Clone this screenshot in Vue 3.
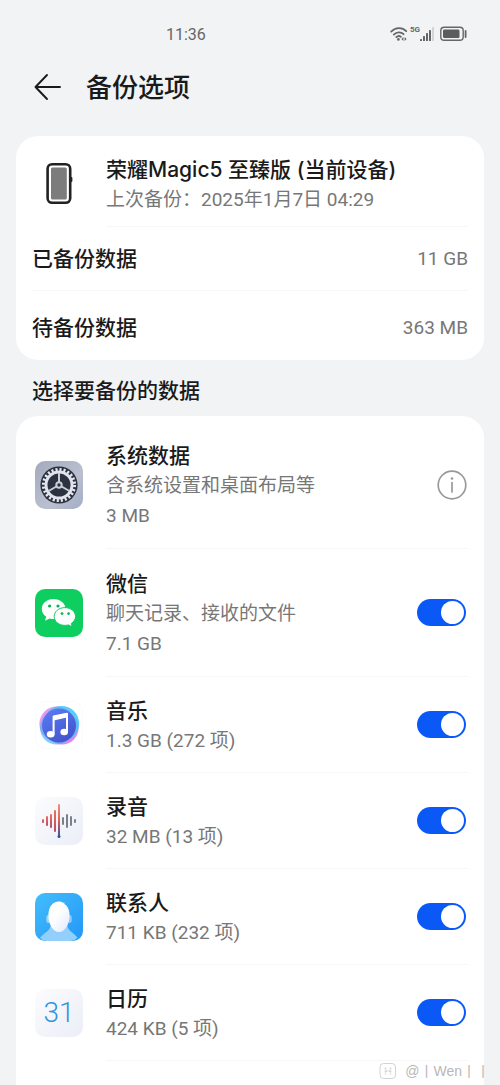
<template>
  <div class="page">
    <div class="status-bar">
      <span class="time">11:36</span>
      <div class="status-icons">
        <svg class="wifi" viewBox="0 0 18 16" aria-hidden="true">
          <g fill="none" stroke="#666" stroke-width="1.8" stroke-linecap="round">
            <path d="M1.2 5.6C5.6 1 12.4 1 16.2 5.2" />
            <path d="M3.8 8.6C6.8 5.6 11 5.6 13.6 8.2" />
            <path d="M6.3 11.2C7.6 9.9 9.6 9.8 10.8 10.8" />
          </g>
          <circle cx="8.4" cy="13.4" r="1.3" fill="#666" />
          <path d="M13.4 11l-2 2 2 2zM14.6 11l2 2-2 2z" fill="#666" />
        </svg>
        <span class="network">5G</span>
        <svg class="signal" viewBox="0 0 15 15" aria-hidden="true">
          <g fill="#666">
            <rect x="0" y="12" width="2" height="2" rx="0.6" />
            <rect x="3" y="9" width="2" height="5" rx="0.6" />
            <rect x="6" y="6" width="2" height="8" rx="0.6" />
            <rect x="9" y="3" width="2" height="11" rx="0.6" />
          </g>
          <rect x="12" y="0" width="2" height="14" rx="0.6" fill="#d3d4d5" />
        </svg>
        <svg class="battery" viewBox="0 0 28 16" aria-hidden="true">
          <rect x="0.8" y="1.3" width="22.4" height="13" rx="3.4" fill="none" stroke="#666" stroke-width="1.4" />
          <rect x="3" y="3.5" width="16.5" height="8.6" rx="1.4" fill="#5c5c5c" />
          <path d="M25.6 5v6" stroke="#666" stroke-width="1.8" stroke-linecap="round" />
        </svg>
      </div>
    </div>

    <header class="header">
      <button class="back-btn" type="button" aria-label="返回">
        <svg viewBox="0 0 28 28" fill="none" stroke="#1a1a1a" stroke-width="1.9" stroke-linecap="round" stroke-linejoin="round">
          <path d="M26 14H1.5M13 2L1.5 14L13 26" />
        </svg>
      </button>
      <h1>备份选项</h1>
    </header>

    <section class="card">
      <div class="row device-row">
        <svg class="icon" viewBox="0 0 48 48" aria-hidden="true">
          <rect x="35" y="17" width="2.4" height="5" rx="1" fill="#222" />
          <rect x="12.6" y="4.2" width="22.6" height="38.6" rx="4.5" fill="#fff" stroke="#222" stroke-width="2.6" />
          <rect x="16" y="7.6" width="15.8" height="31.8" rx="1.5" fill="#7c7c7c" />
        </svg>
        <div class="row-body">
          <div class="row-text">
            <h2>荣耀Magic5 至臻版 (当前设备)</h2>
            <p>上次备份：2025年1月7日 04:29</p>
          </div>
        </div>
      </div>
      <dl>
        <div v-for="item in summary" :key="item.label" class="summary-row">
          <dt>{{ item.label }}</dt>
          <dd>{{ item.value }}</dd>
        </div>
      </dl>
    </section>

    <h3 class="section-title">选择要备份的数据</h3>

    <section class="card list-card">
      <div v-for="app in apps" :key="app.id" class="row" :class="{ tall: app.desc }">
        <svg v-if="app.id === 'system'" class="icon" viewBox="0 0 48 48" aria-hidden="true">
          <defs>
            <linearGradient id="sys-bg" x1="0" y1="0" x2="1" y2="1">
              <stop offset="0" stop-color="#a3aabd" />
              <stop offset="0.6" stop-color="#bac0cf" />
              <stop offset="1" stop-color="#a4adc5" />
            </linearGradient>
          </defs>
          <rect width="48" height="48" rx="10" fill="url(#sys-bg)" />
          <circle cx="24" cy="24" r="18.6" fill="#2c3240" />
          <circle cx="24" cy="24" r="15.4" fill="none" stroke="#e4e7ee" stroke-width="3.4" stroke-dasharray="2.1 1.932" />
          <circle cx="24" cy="24" r="13" fill="none" stroke="#e0e3eb" stroke-width="3" />
          <path d="M24 24V12M24 24L34.4 30M24 24L13.6 30" stroke="#c9cdd8" stroke-width="2" />
          <circle cx="24" cy="24" r="2.7" fill="#2c3240" stroke="#c9cdd8" stroke-width="2" />
        </svg>
        <svg v-else-if="app.id === 'wechat'" class="icon" viewBox="0 0 48 48" aria-hidden="true">
          <rect width="48" height="48" rx="10" fill="#0fce60" />
          <path d="M18.500 10C11.800 10 6.800 14.400 6.800 20c0 3.200 1.800 5.900 4.400 7.800l-1.200 4 4.600-2.400c1.200.3 2.600.6 4 .6C25.300 30 30.500 25.600 30.500 20S25.200 10 18.500 10z" fill="#fff" />
          <path d="M30 18.600c-6.300 0-10.800 4-10.800 8.900s4.500 8.900 10.800 8.900c1.300 0 2.500-.2 3.600-.5l3.600 2-.9-3.400c2.600-1.700 4.200-4.200 4.200-7 0-4.900-4.500-8.900-10.500-8.900z" fill="#fff" stroke="#0fce60" stroke-width="1" />
          <g fill="#07b653">
            <circle cx="14.600" cy="17" r="1.600" />
            <circle cx="23" cy="17" r="1.600" />
            <circle cx="27" cy="24.600" r="1.400" />
            <circle cx="33.600" cy="24.600" r="1.400" />
          </g>
        </svg>
        <svg v-else-if="app.id === 'music'" class="icon" viewBox="0 0 48 48" aria-hidden="true">
          <defs>
            <linearGradient id="music-bg" x1="0.2" y1="0" x2="0.8" y2="1">
              <stop offset="0" stop-color="#5b7bf3" />
              <stop offset="1" stop-color="#4151c9" />
            </linearGradient>
          </defs>
          <rect x="0.5" y="0.5" width="47" height="47" rx="10" fill="#fff" stroke="#fafafa" />
          <circle cx="22" cy="23" r="17.6" fill="#e59af0" />
          <circle cx="27" cy="27" r="16.6" fill="#d58af0" />
          <circle cx="26.5" cy="22.5" r="17.6" fill="#43c3f7" opacity="0.85" />
          <circle cx="21.500" cy="27" r="16.500" fill="#52b6f5" opacity="0.7" />
          <circle cx="24" cy="24.500" r="17" fill="url(#music-bg)" />
          <path d="M18.600 33V15.600L32 12.800V30.500" fill="none" stroke="#fff" stroke-width="2" stroke-linejoin="round" />
          <path d="M18.600 15L32 12v4.400l-13.400 3z" fill="#fff" />
          <ellipse cx="15.700" cy="33.200" rx="3.900" ry="3.200" fill="#fff" />
          <ellipse cx="29.200" cy="31" rx="3.800" ry="3.200" fill="#fff" />
        </svg>
        <svg v-else-if="app.id === 'recorder'" class="icon" viewBox="0 0 48 48" aria-hidden="true">
          <defs>
            <linearGradient id="soft-bg" x1="0" y1="0" x2="1" y2="1">
              <stop offset="0" stop-color="#fcfcfe" />
              <stop offset="1" stop-color="#ebeef8" />
            </linearGradient>
            <linearGradient id="needle" gradientUnits="userSpaceOnUse" x1="0" y1="7" x2="0" y2="40">
              <stop offset="0" stop-color="#f0907c" />
              <stop offset="0.5" stop-color="#e0604f" />
              <stop offset="1" stop-color="#3650a8" />
            </linearGradient>
            <linearGradient id="wave" x1="0" y1="0" x2="0" y2="1">
              <stop offset="0" stop-color="#f0705c" />
              <stop offset="1" stop-color="#b0506c" />
            </linearGradient>
          </defs>
          <rect width="48" height="48" rx="10" fill="url(#soft-bg)" />
          <g fill="url(#wave)">
            <rect x="7" y="22" width="2" height="4" rx="1" />
            <rect x="11" y="19" width="2" height="10" rx="1" />
            <rect x="15" y="17" width="2" height="14" rx="1" />
            <rect x="19" y="13" width="2" height="22" rx="1" />
          </g>
          <rect x="23" y="7" width="2" height="33" rx="1" fill="url(#needle)" />
          <circle cx="24" cy="39.500" r="1.500" fill="#3650a8" />
          <g fill="#7d8088">
            <rect x="27" y="20" width="2" height="8" rx="1" />
            <rect x="31" y="17" width="2" height="14" rx="1" />
            <rect x="35" y="19" width="2" height="10" rx="1" />
            <rect x="39" y="22" width="2" height="4" rx="1" />
          </g>
        </svg>
        <svg v-else-if="app.id === 'contacts'" class="icon" viewBox="0 0 48 48" aria-hidden="true">
          <defs>
            <linearGradient id="contact-bg" x1="0" y1="0" x2="1" y2="1">
              <stop offset="0" stop-color="#43bdfb" />
              <stop offset="1" stop-color="#2397f7" />
            </linearGradient>
            <linearGradient id="face" x1="0" y1="0" x2="1" y2="1">
              <stop offset="0.4" stop-color="#fff" />
              <stop offset="1" stop-color="#e0eafb" />
            </linearGradient>
          </defs>
          <rect width="48" height="48" rx="10" fill="url(#contact-bg)" />
          <path d="M16 30h16c0 8 6 9 10.500 14.500Q39.500 48 35 48H12q-4.500 0-7-3.500C10 39 16 38 16 30z" fill="#92cffb" />
          <ellipse cx="13.200" cy="26" rx="2" ry="4" fill="#9ed4fb" />
          <ellipse cx="34.800" cy="26" rx="2" ry="4" fill="#8fc8fb" />
          <path d="M24 8.500c1.700 0 2.800.4 4 1.300l1.600-.3-.4 1.500c3.600 2 5.400 6 5.400 11.500C34.600 31.500 29.500 39 24 39s-10.600-7.500-10.600-16.500S17.800 8.500 24 8.500z" fill="url(#face)" />
        </svg>
        <div v-else class="icon calendar" aria-hidden="true">31</div>

        <div class="row-body">
          <div class="row-text">
            <h2 :id="'name-' + app.id">{{ app.name }}</h2>
            <p v-if="app.desc">{{ app.desc }}</p>
            <p>{{ app.size }}</p>
          </div>
          <button v-if="app.id === 'system'" class="info-btn" type="button" aria-label="详情">
            <svg viewBox="0 0 30 30" fill="none" stroke="#999">
              <circle cx="15" cy="15" r="13.8" stroke-width="1.7" />
              <path d="M15 12.500V22" stroke-width="1.7" stroke-linecap="round" />
              <circle cx="15" cy="8.500" r="1.3" fill="#999" stroke="none" />
            </svg>
          </button>
          <input
            v-else
            v-model="app.enabled"
            class="switch"
            type="checkbox"
            role="switch"
            :aria-labelledby="'name-' + app.id"
          />
        </div>
      </div>
    </section>

    <div class="watermark">
      <svg viewBox="0 0 18 18" fill="none" stroke="#d4d4d4" aria-hidden="true">
        <rect x="1" y="1.500" width="15.500" height="15" rx="3.500" />
        <path d="M6.500 5.500v7M11.500 5.500v7M6.500 9h5" stroke-width="1.6" stroke-dasharray="2 1" />
      </svg>
      <span>@丨Wen丨丨</span>
    </div>
  </div>
</template>

<script setup>
import { ref } from 'vue'

const summary = [
  { label: '已备份数据', value: '11 GB' },
  { label: '待备份数据', value: '363 MB' },
]

const apps = ref([
  { id: 'system', name: '系统数据', desc: '含系统设置和桌面布局等', size: '3 MB' },
  { id: 'wechat', name: '微信', desc: '聊天记录、接收的文件', size: '7.1 GB', enabled: true },
  { id: 'music', name: '音乐', size: '1.3 GB (272 项)', enabled: true },
  { id: 'recorder', name: '录音', size: '32 MB (13 项)', enabled: true },
  { id: 'contacts', name: '联系人', size: '711 KB (232 项)', enabled: true },
  { id: 'calendar', name: '日历', size: '424 KB (5 项)', enabled: true },
])
</script>

<style>
body {
  background: #f1f3f5;
}
</style>

<style scoped>
.page {
  position: relative;
  display: flex;
  flex-direction: column;
  min-height: 100vh;
  box-sizing: border-box;
  padding: 0 16px;
  background: #f1f3f5;
  color: #1a1a1a;
  font-family: Roboto, "Noto Sans CJK SC", sans-serif;
}

h1,
h2,
h3,
p,
dl,
dd {
  margin: 0;
}

button {
  padding: 0;
  border: none;
  background: none;
  cursor: pointer;
}

svg {
  display: block;
}

.status-bar {
  display: flex;
  align-items: center;
  justify-content: space-between;
  height: 68px;
  padding: 0 16px 0 150px;
  color: #666;
}

.time {
  font-size: 16px;
}

.status-icons {
  display: flex;
  align-items: center;
}

.wifi {
  width: 18px;
  height: 16px;
}

.network {
  align-self: flex-start;
  margin: 0 0 0 2px;
  font-size: 8px;
  font-weight: 700;
  line-height: 8px;
}

.signal {
  width: 15px;
  height: 15px;
}

.battery {
  width: 28px;
  height: 16px;
  margin-left: 5px;
}

.header {
  display: flex;
  align-items: center;
  gap: 24px;
  height: 38px;
  margin-bottom: 30px;
  padding-left: 18px;
}

.back-btn,
.back-btn svg {
  width: 28px;
  height: 28px;
}

h1 {
  padding-top: 2px;
  font-size: 26px;
  font-weight: 500;
  line-height: 38px;
}

.card {
  padding-top: 5px;
  border-radius: 22px;
  background: #fff;
}

.list-card {
  flex: 1;
  border-radius: 22px 22px 0 0;
}

.row {
  display: flex;
  align-items: center;
  gap: 23px;
  height: 96px;
  padding: 0 16px 0 19px;
}

.row.tall {
  height: 128px;
}

.device-row {
  height: 86px;
}

.icon {
  flex: none;
  width: 48px;
  height: 48px;
}

.row-body {
  flex: 1;
  display: flex;
  align-items: center;
  justify-content: space-between;
  box-sizing: border-box;
  height: 100%;
  border-bottom: 1px solid #f7f7f7;
}

.row-text {
  padding-top: 3px;
}

h2,
h3,
dt {
  font-family: Inter, "Noto Sans CJK SC", sans-serif;
  font-size: 21px;
  font-weight: 500;
  line-height: 30px;
}

.row-text p,
dd {
  color: #777;
  font-size: 19px;
  line-height: 30px;
}

.summary-row {
  display: flex;
  align-items: center;
  justify-content: space-between;
  box-sizing: border-box;
  height: 64px;
  margin: 0 16px;
  border-bottom: 1px solid #f7f7f7;
}

.summary-row:last-child {
  margin-top: 5px;
  border-bottom: none;
}

.section-title {
  padding: 16px 16px 10px;
}

.calendar {
  border-radius: 10px;
  background: linear-gradient(135deg, #fcfcfe, #ebeef8);
  color: #2f94de;
  font-size: 28px;
  font-weight: 300;
  line-height: 48px;
  text-align: center;
}

.info-btn,
.info-btn svg {
  width: 30px;
  height: 30px;
}

.info-btn {
  margin-right: 1px;
}

.switch {
  flex: none;
  width: 49px;
  height: 27px;
  margin: 0 2px 0 0;
  border-radius: 14px;
  background: #d5d7da;
  appearance: none;
  cursor: pointer;
}

.switch::before {
  content: "";
  display: block;
  width: 23px;
  height: 23px;
  margin: 2px;
  border-radius: 50%;
  background: #fff;
}

.switch:checked {
  background: #0a59f7;
}

.switch:checked::before {
  margin-left: 24px;
}

.watermark {
  position: absolute;
  right: 10px;
  bottom: 4px;
  display: flex;
  align-items: center;
  gap: 8px;
  color: #b8b8b8;
  font-family: "Liberation Sans", "Noto Sans CJK SC", sans-serif;
  font-size: 14px;
  line-height: 20px;
}

.watermark svg {
  width: 18px;
  height: 18px;
}
</style>
